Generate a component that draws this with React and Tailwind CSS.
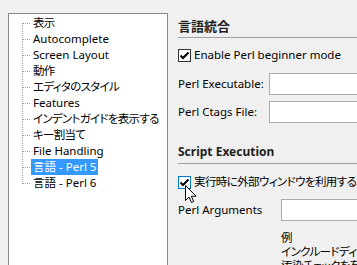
import React from 'react';

const items = [
  { t: '表示', jp: true },
  { t: 'Autocomplete' },
  { t: 'Screen Layout' },
  { t: '動作', jp: true },
  { t: 'エディタのスタイル', jp: true },
  { t: 'Features' },
  { t: 'インデントガイドを表示する', jp: true },
  { t: 'キー割当て', jp: true },
  { t: 'File Handling' },
  { t: '言語 - Perl 5', sel: true },
  { t: '言語 - Perl 6' },
];

function Connector({ first, last }) {
  return (
    <svg width="9" height="16" className="shrink-0" shapeRendering="crispEdges">
      <line x1="0.5" y1={first ? 8 : 0} x2="0.5" y2={last ? 9 : 16} stroke="#a0a0a0" strokeDasharray="1 1" />
      <line x1="1" y1="8.5" x2="9" y2="8.5" stroke="#a0a0a0" strokeDasharray="1 1" />
    </svg>
  );
}

function CheckBox({ focused }) {
  return (
    <span
      className={`w-[13px] h-[13px] shrink-0 flex items-center justify-center bg-white border ${
        focused ? 'border-[#0078d7]' : 'border-[#333333]'
      }`}
    >
      <svg width="11" height="11" viewBox="0 0 11 11">
        <path d="M1.5 5.5 L4 8 L9.5 2.5" fill="none" stroke="#000" strokeWidth="2" />
      </svg>
    </span>
  );
}

export default function App() {
  return (
    <div
      className="relative w-[357px] h-[265px] overflow-hidden bg-[#f0f0f0] flex pt-[13px] pl-[8px] text-[11.5px] text-black"
      style={{ fontFamily: '"Noto Sans", "Noto Sans CJK JP", sans-serif', fontFeatureSettings: '"palt"' }}
    >
      {/* tree */}
      <div className="w-[160px] h-[300px] shrink-0 bg-white border border-[#828790] pt-[1px] pl-[13px]">
        {items.map((it, i) => (
          <div key={it.t} className="flex items-center h-4">
            <Connector first={i === 0} last={i === items.length - 1} />
            <span
              className={`px-[2px] h-4 leading-4 whitespace-nowrap ${it.jp ? 'tracking-[-0.7px]' : ''} ${
                it.sel ? 'bg-[#3399ff] text-white' : ''
              }`}
            >
              {it.t}
            </span>
          </div>
        ))}
      </div>

      {/* settings */}
      <div className="ml-[10px] pt-[4px] flex-1 min-w-0">
        <div className="text-[13px] font-bold leading-[18px] text-[#1e1e1e]">言語統合</div>
        <div className="h-px bg-[#a0a0a0] mt-[2px]" />

        <div className="flex items-center gap-[3px] h-4 mt-[9px] whitespace-nowrap">
          <CheckBox />
          <span>Enable Perl beginner mode</span>
        </div>

        <div className="flex items-center mt-[10px]">
          <span className="w-[91px] shrink-0 whitespace-nowrap">Perl Executable:</span>
          <div className="w-[200px] h-[22px] shrink-0 bg-white border border-[#ababab]" />
        </div>
        <div className="flex items-center mt-[6px]">
          <span className="w-[91px] shrink-0 whitespace-nowrap">Perl Ctags File:</span>
          <div className="w-[200px] h-[22px] shrink-0 bg-white border border-[#ababab]" />
        </div>

        <div className="mt-[20px] text-[12px] font-bold leading-[18px] text-[#1e1e1e] whitespace-nowrap">
          Script Execution
        </div>
        <div className="h-px bg-[#a0a0a0] mt-[2px]" />

        <div className="flex items-center gap-[3px] h-4 mt-[10px] whitespace-nowrap">
          <CheckBox focused />
          <span className="tracking-[-0.6px]">実行時に外部ウィンドウを利用する</span>
        </div>

        <div className="flex items-center mt-[9px]">
          <span className="w-[103px] shrink-0 whitespace-nowrap">Perl Arguments</span>
          <div className="w-[200px] h-[22px] shrink-0 bg-white border border-[#ababab]" />
        </div>

        <div className="ml-[103px] mt-[10px] leading-[14px] whitespace-nowrap tracking-[-0.6px]">
          <div>例</div>
          <div>インクルードディレクトリ: -I&lt;dir&gt;</div>
          <div>汚染チェックを有効にする: -T</div>
        </div>
      </div>

      {/* mouse pointer */}
      <svg className="absolute left-[185px] top-[185px]" width="12" height="19" viewBox="0 0 12 19">
        <path
          d="M0.5 0.5 L0.5 15.5 L4 12 L6.5 17.5 L8.7 16.5 L6.3 11.2 L11 11.2 Z"
          fill="#fff"
          stroke="#000"
          strokeWidth="1"
        />
      </svg>
    </div>
  );
}
